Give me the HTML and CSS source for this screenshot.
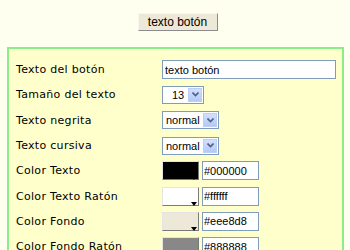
FILE: index.html
```html
<!DOCTYPE html>
<html lang="es">
<head>
    <meta charset="UTF-8">
    <meta name="viewport" content="width=device-width, initial-scale=1.0">
    <title>Configurar botón</title>
    <link rel="stylesheet" href="styles.css">
</head>
<body>
    <div class="preview">
        <button class="demo-btn">texto botón</button>
    </div>

    <div class="panel">
        <span class="label">Texto del botón</span>
        <input class="text-field" type="text" value="texto botón">

        <span class="label">Tamaño del texto</span>
        <div class="combo combo-size">
            <span class="combo-value">13</span>
            <span class="combo-arrow"><svg width="7" height="5" viewBox="0 0 7 5"><path d="M0.5 0.5 L3.5 3.5 L6.5 0.5" fill="none" stroke="#4d6185" stroke-width="1.6"/></svg></span>
        </div>

        <span class="label">Texto negrita</span>
        <div class="combo">
            <span class="combo-value">normal</span>
            <span class="combo-arrow"><svg width="7" height="5" viewBox="0 0 7 5"><path d="M0.5 0.5 L3.5 3.5 L6.5 0.5" fill="none" stroke="#4d6185" stroke-width="1.6"/></svg></span>
        </div>

        <span class="label">Texto cursiva</span>
        <div class="combo">
            <span class="combo-value">normal</span>
            <span class="combo-arrow"><svg width="7" height="5" viewBox="0 0 7 5"><path d="M0.5 0.5 L3.5 3.5 L6.5 0.5" fill="none" stroke="#4d6185" stroke-width="1.6"/></svg></span>
        </div>

        <span class="label">Color Texto</span>
        <div class="color-pick">
            <span class="swatch swatch-black"></span>
            <input class="hex" type="text" value="#000000">
        </div>

        <span class="label">Color Texto Ratón</span>
        <div class="color-pick">
            <span class="swatch swatch-white"></span>
            <input class="hex" type="text" value="#ffffff">
        </div>

        <span class="label">Color Fondo</span>
        <div class="color-pick">
            <span class="swatch swatch-beige"></span>
            <input class="hex" type="text" value="#eee8d8">
        </div>

        <span class="label">Color Fondo Ratón</span>
        <div class="color-pick">
            <span class="swatch swatch-gray"></span>
            <input class="hex" type="text" value="#888888">
        </div>
    </div>
</body>
</html>
```

FILE: styles.css
```css
body {
    margin: 0;
    padding: 13px 6px 0 7px;
    background-color: #ffffef;
    font-family: "DejaVu Sans", Verdana, sans-serif;
}
.preview {
    display: flex;
    justify-content: center;
    padding-left: 4px;
}
.demo-btn {
    width: 80px;
    height: 18px;
    padding: 0;
    background-color: #eee8d8;
    border: 1px solid;
    border-color: #f8f6ef #8c8c8c #8c8c8c #f8f6ef;
    font-family: "Liberation Sans", Arial, sans-serif;
    font-size: 12px;
    color: #000;
}
.panel {
    margin-top: 16px;
    padding: 8px 7px 0 7px;
    background-color: #ffffcc;
    border: 2px solid #88ee88;
    display: grid;
    grid-template-columns: 146px 1fr;
    grid-auto-rows: 25.3px;
    align-items: center;
}
.label {
    font-size: 11px;
    letter-spacing: 0.3px;
    color: #000;
}
.text-field {
    box-sizing: border-box;
    width: 174px;
    height: 19px;
    margin: 0;
    padding: 0 2px;
    border: 1px solid #7f9db9;
    background: #fff;
    font-family: "Liberation Sans", Arial, sans-serif;
    font-size: 11px;
    color: #000;
}
.combo {
    box-sizing: border-box;
    display: flex;
    align-items: center;
    justify-content: space-between;
    width: 57px;
    height: 18px;
    padding: 0 1px 0 3px;
    border: 1px solid #7f9db9;
    background: #fff;
}
.combo-size {
    width: 42px;
    padding-left: 9px;
}
.combo-value {
    font-family: "Liberation Sans", Arial, sans-serif;
    font-size: 11px;
    color: #000;
}
.combo-arrow {
    box-sizing: border-box;
    display: flex;
    align-items: center;
    justify-content: center;
    width: 14px;
    height: 14px;
    border: 1px solid #bccff7;
    background: linear-gradient(#d3e0fd, #b4c9f6);
}
.color-pick {
    display: flex;
    align-items: center;
    gap: 3px;
}
.swatch {
    position: relative;
    box-sizing: border-box;
    width: 37px;
    height: 19px;
    border: 1px solid;
    border-color: #e4e4e4 #7a7a7a #7a7a7a #e4e4e4;
}
.swatch::after {
    content: "";
    position: absolute;
    right: 1px;
    bottom: -1px;
    border-left: 3px solid transparent;
    border-right: 3px solid transparent;
    border-top: 4px solid #000;
}
.swatch-black { background: #000000; }
.swatch-white { background: #ffffff; }
.swatch-beige { background: #eee8d8; }
.swatch-gray { background: #888888; }
.hex {
    box-sizing: border-box;
    width: 57px;
    height: 19px;
    margin: 0;
    padding: 0 1px;
    border: 1px solid #7f9db9;
    background: #fff;
    font-family: "Liberation Sans", Arial, sans-serif;
    font-size: 11px;
    color: #000;
}
```
